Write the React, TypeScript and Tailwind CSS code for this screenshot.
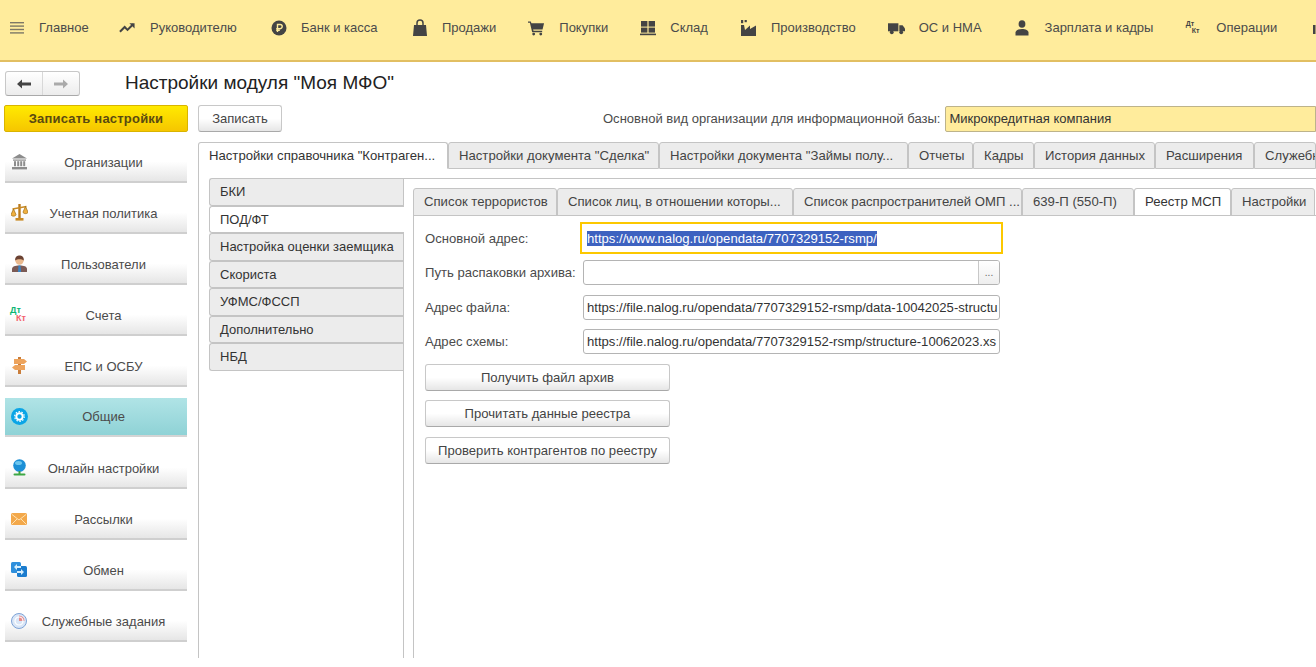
import type { ReactNode } from "react";

const font = { fontFamily: '"Liberation Sans", Arial, sans-serif' };

const Bars = () => (
  <svg width="16" height="16" viewBox="0 0 16 16" fill="#7d7866">
    <rect x="1" y="2" width="14" height="1.4" />
    <rect x="1" y="5.4" width="14" height="1.4" />
    <rect x="1" y="8.8" width="14" height="1.4" />
    <rect x="1" y="12.2" width="14" height="1.4" />
  </svg>
);
const Trend = () => (
  <svg width="18" height="16" viewBox="0 0 18 16" fill="none" stroke="#444" strokeWidth="2.2">
    <path d="M1 12l5-5 3 3 6-6" />
    <path d="M11 3h5.500v5.500" fill="#444" stroke="none" />
  </svg>
);
const Ruble = () => (
  <svg width="16" height="16" viewBox="0 0 16 16">
    <circle cx="8" cy="8" r="7.5" fill="#444" />
    <path d="M6.5 12V4.5h2.6a2 2 0 010 4.2H5.2M5.2 10.4h3.6" fill="none" stroke="#ffec9c" strokeWidth="1.4" />
  </svg>
);
const Bag = () => (
  <svg width="16" height="18" viewBox="0 0 16 18" fill="#444">
    <path d="M2 6h12l1 11H1z" />
    <path d="M5 6V4a3 3 0 016 0v2" fill="none" stroke="#444" strokeWidth="1.5" />
  </svg>
);
const Cart = () => (
  <svg width="18" height="16" viewBox="0 0 18 16" fill="#444">
    <path d="M0 1h3l.6 2H17l-1.6 6.5H5.4l.4 1.5H15v1.4H4.4L2 2.4H0z" />
    <circle cx="6" cy="14.4" r="1.5" />
    <circle cx="13.5" cy="14.4" r="1.5" />
  </svg>
);
const Stock = () => (
  <svg width="16" height="16" viewBox="0 0 16 16" fill="#444">
    <rect x="1" y="1" width="6.4" height="5.6" />
    <rect x="8.6" y="1" width="6.4" height="5.6" />
    <rect x="1" y="7.6" width="6.4" height="5" />
    <rect x="8.6" y="7.6" width="6.4" height="5" />
    <rect x="0" y="13.6" width="16" height="1.6" />
  </svg>
);
const Factory = () => (
  <svg width="16" height="18" viewBox="0 0 16 18" fill="#444">
    <rect x="1" y="1" width="2.2" height="3.2" />
    <rect x="4.6" y="1" width="2.2" height="2.2" />
    <path d="M1 17V6h3l1 5 5-4.500v3.500l6-3.500V17z" />
  </svg>
);
const Truck = () => (
  <svg width="18" height="14" viewBox="0 0 18 14" fill="#444">
    <rect x="0" y="2" width="11" height="8.5" />
    <path d="M12 4h3.4L18 7.4v3.1h-6z" />
    <circle cx="4" cy="11.5" r="2" />
    <circle cx="14" cy="11.5" r="2" />
  </svg>
);
const Person = () => (
  <svg width="16" height="16" viewBox="0 0 16 16" fill="#444">
    <ellipse cx="8" cy="4" rx="3.400" ry="3.800" />
    <path d="M1.500 15.500v-3c0-2 2.800-3.600 6.500-3.600s6.500 1.600 6.500 3.600v3z" />
  </svg>
);
const Chart = () => (
  <svg width="10" height="12" viewBox="0 0 10 12" fill="#444">
    <rect x="0" y="3" width="2.5" height="9" />
    <rect x="3.6" y="0" width="2.5" height="12" />
    <rect x="7.2" y="6" width="2.5" height="6" />
  </svg>
);
const NavDtKt = () => (
  <span className="relative block h-[16px] w-[16px] leading-none">
    <span className="absolute left-0 top-0 text-[7px] font-bold text-[#444]">Дт</span>
    <span className="absolute left-[6px] top-[7px] text-[7px] font-bold text-[#444]">Кт</span>
  </span>
);
const SideDtKt = () => (
  <span className="relative block h-[17px] w-[18px] leading-none">
    <span className="absolute left-0 top-0 text-[9px] font-bold text-[#0bb673]">Дт</span>
    <span className="absolute left-[6px] top-[8px] text-[9px] font-bold text-[#f4606c]">Кт</span>
  </span>
);

// w keeps the menu items on the same columns as the reference
const navItems: { icon: ReactNode; label?: string; w?: string }[] = [
  { icon: <Bars />, label: "Главное", w: "w-[48px]" },
  { icon: <Trend />, label: "Руководителю", w: "w-[88px]" },
  { icon: <Ruble />, label: "Банк и касса", w: "w-[78px]" },
  { icon: <Bag />, label: "Продажи" },
  { icon: <Cart />, label: "Покупки", w: "w-[48px]" },
  { icon: <Stock />, label: "Склад" },
  { icon: <Factory />, label: "Производство" },
  { icon: <Truck />, label: "ОС и НМА" },
  { icon: <Person />, label: "Зарплата и кадры" },
  { icon: <NavDtKt />, label: "Операции" },
  { icon: <Chart /> },
];

const Bank = () => (
  <svg width="17" height="16" viewBox="0 0 17 16" fill="#8c8c8c">
    <path d="M8.5 0L16 4.5H1z" />
    <rect x="2" y="5.5" width="13" height="1.2" />
    <rect x="3" y="7.2" width="2" height="5" />
    <rect x="6.2" y="7.2" width="2" height="5" />
    <rect x="9.2" y="7.2" width="2" height="5" />
    <rect x="12.2" y="7.2" width="2" height="5" />
    <rect x="1" y="13" width="15" height="2.4" />
  </svg>
);
const Scales = () => (
  <svg width="17" height="17" viewBox="0 0 17 17" fill="none">
    <path d="M8.5 0v14" stroke="#b97a1c" strokeWidth="2.4" />
    <path d="M1.500 5l14-2.500" stroke="#c98a24" strokeWidth="1.500" />
    <path d="M0 10.500l2.500-5.500L5 10.500c0 2.200-5 2.200-5 0z" fill="#f0b040" stroke="#9a6a14" strokeWidth=".7" />
    <path d="M12 8l2.500-5.500L17 8c0 2.200-5 2.200-5 0z" fill="#f0b040" stroke="#9a6a14" strokeWidth=".7" />
    <rect x="4.500" y="14" width="8" height="2.600" fill="#c98a24" />
  </svg>
);
const User = () => (
  <svg width="17" height="17" viewBox="0 0 17 17">
    <path d="M1 17v-3C1 11.500 4 10.500 8.500 10.500s7.500 1 7.500 3.500v3z" fill="#7b5a55" />
    <path d="M7.500 10.500h2l.6 6.500H7z" fill="#3a84c4" />
    <circle cx="8.500" cy="5.500" r="4.200" fill="#eab98e" />
    <path d="M4.200 5.500C3.800 1.500 6.500.5 8.500.5s4.700 1 4.300 5C11 3.800 6 3.800 4.200 5.500z" fill="#6b4233" />
  </svg>
);
const Sign = () => (
  <svg width="17" height="17" viewBox="0 0 17 17" fill="#eda35c">
    <rect x="7" y="0" width="3" height="17" fill="#c97d3a" />
    <path d="M3 2h10l3 2.500-3 2.500H3z" />
    <path d="M14 8H4l-3 2.500L4 13h10z" />
  </svg>
);
const Gear = () => (
  <svg width="17" height="17" viewBox="0 0 17 17">
    <circle cx="8.500" cy="8.500" r="8.500" fill="#0aa5e6" />
    <circle cx="8.500" cy="8.500" r="3.200" fill="none" stroke="#fff" strokeWidth="2" />
    <circle cx="8.500" cy="8.500" r="4.800" fill="none" stroke="#fff" strokeWidth="1.200" strokeDasharray="1.500 1.500" />
  </svg>
);
const Globe = () => (
  <svg width="17" height="17" viewBox="0 0 17 17">
    <circle cx="8.500" cy="6.500" r="6.300" fill="#1c8fd6" />
    <ellipse cx="7.500" cy="4" rx="3.500" ry="2" fill="#6cc6ef" />
    <rect x="7.500" y="12" width="2" height="3" fill="#3d9e3d" />
    <rect x="2.500" y="14.500" width="12" height="2" rx="1" fill="#3fa845" />
  </svg>
);
const Mail = () => (
  <svg width="16" height="12" viewBox="0 0 16 12">
    <rect width="16" height="12" rx="1.500" fill="#f3a84a" />
    <path d="M1 1.500l7 5.500 7-5.500M1 11l5-5M15 11l-5-5" fill="none" stroke="#ffe2b0" strokeWidth="1" />
  </svg>
);
const Sync = () => (
  <svg width="17" height="17" viewBox="0 0 17 17">
    <rect x="0" y="1" width="10" height="11" rx="1.500" fill="#2e8fdc" />
    <rect x="6" y="5" width="10" height="11" rx="1.500" fill="#1b7cce" />
    <path d="M3 6l3-3v2h4v2H6v2zM13 11l-3 3v-2H6v-2h4V8z" fill="#d6eefc" />
  </svg>
);
const Tasks = () => (
  <svg width="16" height="16" viewBox="0 0 16 16">
    <circle cx="8" cy="8" r="7.500" fill="#d9e6f7" stroke="#7ea3d6" />
    <path d="M8 8V2.500A5.500 5.500 0 0113.500 8z" fill="#e88a8a" />
    <circle cx="8" cy="8" r="4" fill="none" stroke="#fff" strokeWidth="1.200" />
  </svg>
);

const sideItems: { icon: ReactNode; label: string; active?: boolean }[] = [
  { icon: <Bank />, label: "Организации" },
  { icon: <Scales />, label: "Учетная политика" },
  { icon: <User />, label: "Пользователи" },
  { icon: <SideDtKt />, label: "Счета" },
  { icon: <Sign />, label: "ЕПС и ОСБУ" },
  { icon: <Gear />, label: "Общие", active: true },
  { icon: <Globe />, label: "Онлайн настройки" },
  { icon: <Mail />, label: "Рассылки" },
  { icon: <Sync />, label: "Обмен" },
  { icon: <Tasks />, label: "Служебные задания" },
];

const topTabs = [
  { label: 'Настройки справочника "Контраген...', w: "w-[250px]", active: true },
  { label: 'Настройки документа "Сделка"', w: "w-[211px]" },
  { label: 'Настройки документа "Займы полу...', w: "w-[249px]" },
  { label: "Отчеты", w: "w-[65px]" },
  { label: "Кадры", w: "w-[61px]" },
  { label: "История данных", w: "w-[121px]" },
  { label: "Расширения", w: "w-[99px]" },
  { label: "Служебные", w: "w-[62px]" },
];

const innerTabs = [
  { label: "Список террористов", w: "w-[144px]" },
  { label: "Список лиц, в отношении которы...", w: "w-[236px]" },
  { label: "Список распространителей ОМП ...", w: "w-[229px]" },
  { label: "639-П (550-П)", w: "w-[112px]" },
  { label: "Реестр МСП", w: "w-[97px]", active: true },
  { label: "Настройки", w: "w-[84px]" },
];

const leftTabs = ["БКИ", "ПОД/ФТ", "Настройка оценки заемщика", "Скориста", "УФМС/ФССП", "Дополнительно", "НБД"];

const fieldBox =
  "h-[25px] w-[417px] shrink-0 overflow-hidden whitespace-nowrap rounded-[3px] border border-[#b4b4b4] bg-white px-[3px] leading-[23px] text-[#333]";

function ActionButton({ label, top }: { label: string; top: string }) {
  return (
    <button
      className={`block h-[27px] w-[245px] rounded-[3px] border border-[#c8c8c8] border-b-[#a9a9a9] bg-gradient-to-b from-white via-white to-[#e6e6e6] text-[#444] ${top}`}
    >
      {label}
    </button>
  );
}

export default function App() {
  return (
    <div style={font} className="h-[667px] w-[1316px] overflow-hidden bg-white text-[13px] text-[#4b4b4b]">
      {/* Top menu */}
      <div className="flex h-[62px] items-center gap-[32px] border-b-2 border-[#e2bf62] bg-[#ffec9c] pb-[4px] pl-[8px]">
        {navItems.map((item, i) => (
          <div key={i} className="flex shrink-0 items-center gap-[14px]">
            <span className="flex h-[18px] w-[17px] items-center justify-center">{item.icon}</span>
            {item.label && <span className={`whitespace-nowrap ${item.w ?? ""}`}>{item.label}</span>}
          </div>
        ))}
      </div>

      {/* Title row */}
      <div className="flex h-[43px] items-center pl-[5px]">
        <div className="flex h-[25px] w-[75px] items-center rounded-[3px] border border-[#c8c8c8] border-b-[#a9a9a9] bg-gradient-to-b from-white to-[#ececec]">
          <span className="flex h-full w-[37px] items-center justify-center border-r border-[#d8d8d8]">
            <svg width="14" height="10" viewBox="0 0 14 10" fill="#444">
              <path d="M0 5l5-4.500V3.500h9v3H5v3z" />
            </svg>
          </span>
          <span className="flex h-full flex-1 items-center justify-center">
            <svg width="14" height="10" viewBox="0 0 14 10" fill="#aaa">
              <path d="M14 5L9 .5V3.500H0v3h9v3z" />
            </svg>
          </span>
        </div>
        <h1 className="ml-[45px] text-[19px] font-normal text-[#222]">Настройки модуля "Моя МФО"</h1>
      </div>

      {/* Command row */}
      <div className="flex h-[27px] items-center pl-[4px]">
        <button className="h-[27px] w-[184px] rounded-[2px] border border-[#d9b400] bg-gradient-to-b from-[#ffea00] to-[#f6c600] font-bold tracking-[0.2px] text-[#5a4a10]">
          Записать настройки
        </button>
        <button className="ml-[10px] h-[27px] w-[84px] rounded-[3px] border border-[#c8c8c8] border-b-[#a9a9a9] bg-gradient-to-b from-white via-white to-[#e6e6e6] text-[#444]">
          Записать
        </button>
        <span className="ml-[321px] whitespace-nowrap text-[13.03px]">Основной вид организации для информационной базы:</span>
        <div className="ml-[5px] h-[26px] flex-1 rounded-l-[2px] border border-[#bdb38a] bg-[#ffec9c] pl-[3px] leading-[24px] text-[#333]">
          Микрокредитная компания
        </div>
      </div>

      <div className="flex h-[527px] pl-[5px] pt-[10px]">
        {/* Left section list */}
        <div className="flex w-[182px] shrink-0 flex-col">
          {sideItems.map((item) => (
            <div
              key={item.label}
              className={`relative flex items-center justify-center pl-[15px] ${
                item.active
                  ? "mb-[12px] h-[39px] translate-y-[1px] border-b-2 border-[#d4d4d4] bg-gradient-to-b from-[#b0e4e6] to-[#8fd2d6] pt-[1px]"
                  : "mb-[10px] h-[41px] border-b-2 border-[#cfcfcf] bg-gradient-to-b from-white via-white to-[#e6e6e6] pt-[2px]"
              }`}
            >
              <span className="absolute left-[5px] top-1/2 flex h-[18px] w-[18px] -translate-y-1/2 items-center justify-center">
                {item.icon}
              </span>
              <span className="whitespace-nowrap">{item.label}</span>
            </div>
          ))}
        </div>

        {/* Main panel */}
        <div className="ml-[11px] flex min-w-0 flex-1 flex-col">
          <div className="flex h-[27px] shrink-0 text-[13.15px]">
            {topTabs.map((tab) => (
              <div
                key={tab.label}
                className={`shrink-0 overflow-hidden whitespace-nowrap rounded-t-[3px] border border-[#c4c4c4] pl-[10px] leading-[25px] ${tab.w} ${
                  tab.active ? "border-b-white bg-white text-[#333]" : "bg-[#ececec] text-[#444]"
                }`}
              >
                {tab.label}
              </div>
            ))}
          </div>
          <div className="-mt-px flex h-[490px] border-l border-[#c4c4c4] pl-[10px] pt-[10px]">
            {/* Vertical tabs */}
            <div className="w-[194px] shrink-0">
              {leftTabs.map((tab, i) => (
                <div
                  key={tab}
                  className={`h-[27.5px] whitespace-nowrap rounded-l-[3px] border border-r-0 border-[#c4c4c4] pl-[10px] leading-[25px] text-[#333] ${
                    i === 1 ? "relative z-10 mr-[-1px] bg-white" : "bg-[#ececec]"
                  }`}
                >
                  {tab}
                </div>
              ))}
            </div>

            <div className="flex min-w-0 flex-1 flex-col border-l border-t border-[#c4c4c4] pl-[9px] pt-[9px]">
              <div className="flex h-[28px] shrink-0 text-[13.15px]">
                {innerTabs.map((tab) => (
                  <div
                    key={tab.label}
                    className={`shrink-0 overflow-hidden whitespace-nowrap rounded-t-[3px] border border-[#c4c4c4] pl-[10px] leading-[26px] ${tab.w} ${
                      tab.active ? "border-b-white bg-white text-[#333]" : "bg-[#ececec] text-[#444]"
                    }`}
                  >
                    {tab.label}
                  </div>
                ))}
              </div>

              <div className="-mt-px flex-1 border-l border-t border-[#c4c4c4] pl-[11px] pt-[6px] text-[13.1px]">
                {/* Form rows */}
                <div className="flex h-[32px] items-center">
                  <span className="w-[155px] shrink-0 pt-[1px]">Основной адрес:</span>
                  <div className="h-[32px] w-[423px] shrink-0 border-2 border-[#fcc800] pl-[5px] pt-[7px] leading-[16px]">
                    <span className="bg-[#3d62c0] text-white">https://www.nalog.ru/opendata/7707329152-rsmp/</span>
                  </div>
                </div>
                <div className="mt-[6px] flex items-center">
                  <span className="w-[158px] shrink-0 whitespace-nowrap">Путь распаковки архива:</span>
                  <div className="flex h-[25px] w-[417px] shrink-0 overflow-hidden rounded-[3px] border border-[#b4b4b4] bg-white">
                    <span className="flex-1" />
                    <span className="w-[21px] border-l border-[#c8c8c8] bg-gradient-to-b from-white to-[#eeeeee] text-center text-[10px] leading-[24px] text-[#666]">
                      ...
                    </span>
                  </div>
                </div>
                <div className="mt-[10px] flex items-center">
                  <span className="w-[158px] shrink-0">Адрес файла:</span>
                  <div className={fieldBox}>https://file.nalog.ru/opendata/7707329152-rsmp/data-10042025-structu</div>
                </div>
                <div className="mt-[9px] flex items-center">
                  <span className="w-[158px] shrink-0">Адрес схемы:</span>
                  <div className={fieldBox}>https://file.nalog.ru/opendata/7707329152-rsmp/structure-10062023.xs</div>
                </div>
                <ActionButton label="Получить файл архив" top="mt-[10px]" />
                <ActionButton label="Прочитать данные реестра" top="mt-[9px]" />
                <ActionButton label="Проверить контрагентов по реестру" top="mt-[10px]" />
              </div>
            </div>
          </div>
        </div>
      </div>
    </div>
  );
}
